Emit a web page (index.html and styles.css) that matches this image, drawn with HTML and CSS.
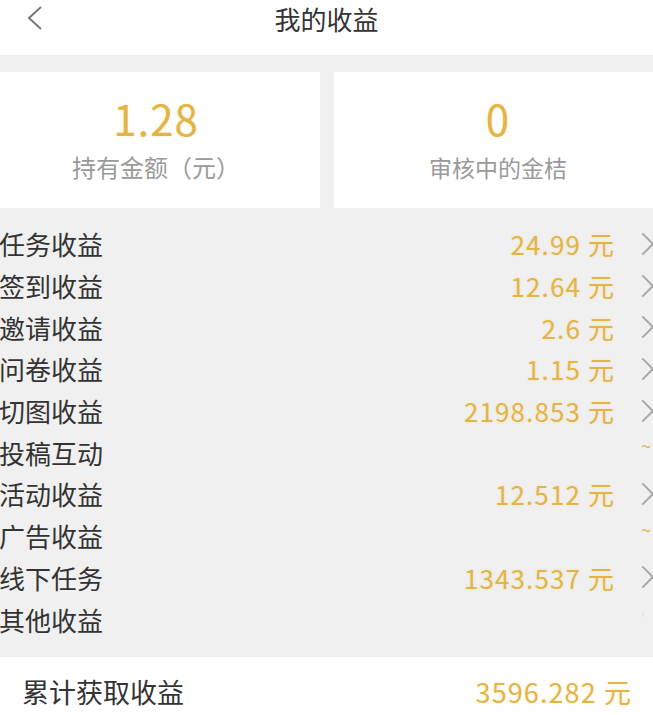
FILE: index.html
```html
<!DOCTYPE html>
<html lang="zh-CN">
<head>
<meta charset="UTF-8" />
<meta name="viewport" content="width=device-width, initial-scale=1" />
<title>我的收益</title>
<link rel="stylesheet" href="styles.css">
</head>
<body>
<div class="page">
  <header class="topbar">
    <a class="back" aria-label="返回">
      <svg width="18" height="26" viewBox="0 0 18 26"><polyline points="15,2 3,13 15,24" fill="none" stroke="#777" stroke-width="2" /></svg>
    </a>
    <h1 class="title">我的收益</h1>
  </header>

  <main class="content">
    <section class="cards">
      <div class="card">
        <div class="card-num">1.28</div>
        <div class="card-label">持有金额（元）</div>
      </div>
      <div class="card">
        <div class="card-num">0</div>
        <div class="card-label">审核中的金桔</div>
      </div>
    </section>

    <ul class="list">
      <li class="row"><span class="name">任务收益</span><span class="value">24.99 元</span><span class="arrow"></span></li>
      <li class="row"><span class="name">签到收益</span><span class="value">12.64 元</span><span class="arrow"></span></li>
      <li class="row"><span class="name">邀请收益</span><span class="value">2.6 元</span><span class="arrow"></span></li>
      <li class="row"><span class="name">问卷收益</span><span class="value">1.15 元</span><span class="arrow"></span></li>
      <li class="row"><span class="name">切图收益</span><span class="value">2198.853 元</span><span class="arrow"></span></li>
      <li class="row"><span class="name">投稿互动</span><span class="value"></span><span class="tilde">~</span></li>
      <li class="row"><span class="name">活动收益</span><span class="value">12.512 元</span><span class="arrow"></span></li>
      <li class="row"><span class="name">广告收益</span><span class="value"></span><span class="tilde">~</span></li>
      <li class="row"><span class="name">线下任务</span><span class="value">1343.537 元</span><span class="arrow"></span></li>
      <li class="row"><span class="name">其他收益</span><span class="value"></span><span class="tilde faint">'</span></li>
    </ul>
  </main>

  <footer class="total">
    <span class="total-name">累计获取收益</span>
    <span class="total-value">3596.282 元</span>
  </footer>
</div>
</body>
</html>
```

FILE: styles.css
```css
:root {
  --bg: #f0f0f0;
  --card-bg: #ffffff;
  --text: #333333;
  --muted: #9a9a9a;
  --gold: #e3b447;
  --font: "Noto Sans CJK SC", "Noto Sans", sans-serif;
}

* {
  box-sizing: border-box;
}

body {
  margin: 0;
  background: var(--bg);
  font-family: var(--font);
  color: var(--text);
  overflow: hidden;
}

.page {
  width: 653px;
  height: 715px;
  overflow: hidden;
  display: flex;
  flex-direction: column;
}

.topbar {
  height: 55px;
  padding-top: 2px;
  background: #fff;
  display: flex;
  justify-content: center;
  position: relative;
}

.back {
  position: absolute;
  left: 26px;
  top: 5px;
}

.title {
  margin: 0;
  font-size: 26px;
  font-weight: 400;
  line-height: 34px;
  color: #333;
}

.content {
  padding-top: 17px;
}

.cards {
  display: flex;
  gap: 14px;
  margin-left: -8px;
  width: 680px;
}

.card {
  width: 328px;
  height: 136px;
  background: var(--card-bg);
  display: flex;
  flex-direction: column;
  align-items: center;
  padding-top: 20px;
}

.card-num {
  font-size: 42px;
  line-height: 52px;
  color: var(--gold);
  letter-spacing: 1px;
  text-shadow: 0 0 3px rgba(240, 200, 80, 0.35);
}

.card-label {
  margin-top: 1px;
  font-size: 23px;
  line-height: 44px;
  color: var(--muted);
}

.card:first-child .card-label {
  font-size: 24px;
}

.list {
  list-style: none;
  margin: 15px 0 0;
  padding: 0 0 17px;
}

.row {
  height: 41.7px;
  display: flex;
  align-items: center;
  font-size: 26px;
}

.name {
  flex: 1;
  margin-left: -1px;
  color: var(--text);
}

.value {
  color: var(--gold);
  letter-spacing: 1.1px;
  text-shadow: 0 0 3px rgba(240, 200, 80, 0.3);
}

.arrow {
  width: 38px;
  height: 22px;
  position: relative;
}

.arrow::after {
  content: "";
  position: absolute;
  left: 20px;
  top: 3px;
  width: 14px;
  height: 14px;
  border-top: 2px solid #a8a8a8;
  border-right: 2px solid #a8a8a8;
  transform: rotate(45deg);
}

.tilde {
  width: 38px;
  padding-left: 26px;
  margin-top: -14px;
  font-size: 18px;
  color: var(--gold);
  white-space: nowrap;
}

.tilde.faint {
  color: #ddd;
  margin-top: 0;
  font-size: 14px;
}

.total {
  flex: 1;
  background: #fff;
  display: flex;
  align-items: center;
  justify-content: space-between;
  padding: 12px 21px 0 22px;
  font-size: 27px;
}

.total-value {
  color: var(--gold);
  letter-spacing: 1.1px;
  text-shadow: 0 0 3px rgba(240, 200, 80, 0.3);
}
```
